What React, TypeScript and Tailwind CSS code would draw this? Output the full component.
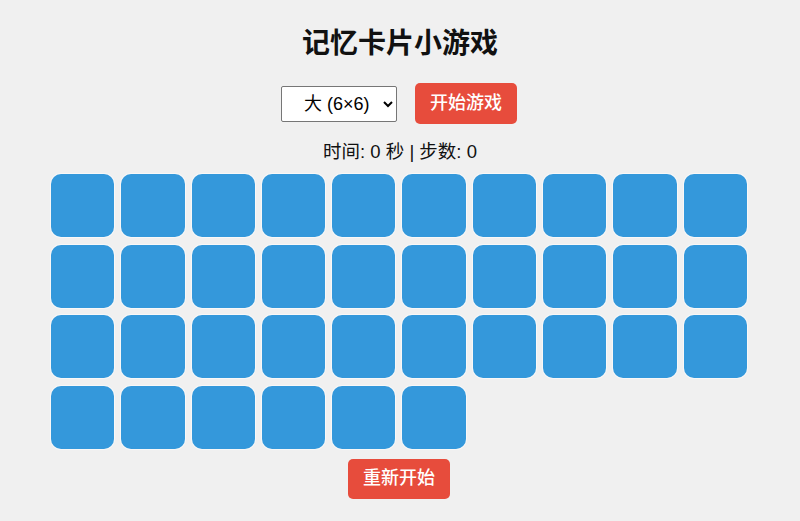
import React, { useState } from 'react'

const FONT = '"Liberation Sans", "Noto Sans CJK SC", Arial, sans-serif'

export default function App() {
  const [size, setSize] = useState('6')
  const cards = Array.from({ length: 36 })

  return (
    <div className="min-h-[521px] w-full bg-[#f0f0f0] flex flex-col items-center text-[#111]" style={{ fontFamily: FONT }}>
      <h1 className="mt-[27px] text-[28px] leading-[34px] font-bold">记忆卡片小游戏</h1>

      {/* controls */}
      <div className="mt-[22px] mr-[2px] flex items-center gap-[18px]">
        <select
          value={size}
          onChange={(e) => setSize(e.target.value)}
          className="w-[116px] h-[36px] pl-[18px] pr-2 text-[18px] bg-white border border-[#767676] rounded-[2px] text-black"
        >
          <option value="4">小 (4×4)</option>
          <option value="5">中 (5×4)</option>
          <option value="6">大 (6×6)</option>
        </select>
        <button className="w-[102px] h-[41px] rounded-[5px] bg-[#e74c3c] text-white text-[18px] font-medium">开始游戏</button>
      </div>

      <div className="mt-[17px] text-[18.5px] leading-[22px]">时间: 0 秒 | 步数: 0</div>

      {/* board */}
      <div className="mt-[11px] mr-[2px] w-[696px] grid grid-cols-10 gap-x-[7px] gap-y-[7.5px]">
        {cards.map((_, i) => (
          <div
            key={i}
            className="h-[63px] rounded-[10px] bg-[#3498db] shadow-[0_0_0_1px_rgba(255,255,255,0.5)]"
          />
        ))}
      </div>

      <button className="mt-[10px] mr-[2px] w-[102px] h-[40px] rounded-[5px] bg-[#e74c3c] text-white text-[18px] font-medium">重新开始</button>
    </div>
  )
}
